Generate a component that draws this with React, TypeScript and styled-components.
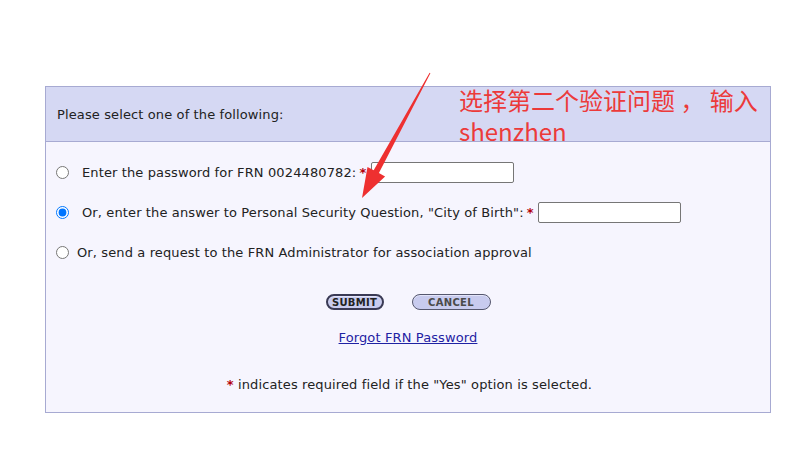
import React from "react";
import styled, { createGlobalStyle } from "styled-components";

const Global = createGlobalStyle`
  html, body { margin: 0; padding: 0; background: #ffffff; }
  body { font-family: "DejaVu Sans", Verdana, sans-serif; font-size: 13px; color: #222; }
`;

const Page = styled.div`
  position: relative;
  width: 803px;
  height: 456px;
  padding: 86px 0 0 45px;
  box-sizing: border-box;
`;

const Panel = styled.div`
  width: 726px;
  border: 1px solid #a7aad2;
  box-sizing: border-box;
  background: #f6f5fe;
`;

const Header = styled.div`
  height: 54px;
  background: #d5d8f3;
  border-bottom: 1px solid #a7aad2;
  display: flex;
  align-items: center;
  padding-left: 11px;
  font-size: 13px;
  letter-spacing: 0.12px;
  color: #222;
`;

const Body = styled.div`
  padding: 10px 0 0 9px;
  height: 270px;
  box-sizing: border-box;
  display: flex;
  flex-direction: column;
  font-size: 13px;
  letter-spacing: 0.12px;
`;

const Row = styled.label`
  height: 40px;
  display: flex;
  align-items: center;
  color: #222;
`;

const Radio = styled.input.attrs({ type: "radio", name: "opt" })`
  width: 13px;
  height: 13px;
  margin: 0 ${(p: { $gap: number }) => p.$gap}px 0 1px;
  accent-color: #0075ff;
`;

const Star = styled.span`
  color: #b3000c;
  font-weight: bold;
  margin-left: 3px;
`;

const TextBox = styled.input.attrs({ type: "text" })`
  width: 143px;
  height: 21px;
  box-sizing: border-box;
  border: 1px solid #767676;
  border-radius: 2px;
  background: #fff;
  margin-left: ${(p: { $left: number }) => p.$left}px;
`;

const Buttons = styled.div`
  display: flex;
  justify-content: center;
  gap: 28px;
  margin-top: 22px;
  padding-right: 9px;
`;

const Pill = styled.button<{ $w: number; $dark?: boolean }>`
  width: ${(p) => p.$w}px;
  height: 16px;
  border-radius: 9px;
  border: ${(p) => (p.$dark ? "2px solid #3a3a55" : "1px solid #55576e")};
  background: #c8cbee;
  font-family: "DejaVu Sans", Verdana, sans-serif;
  font-size: 10px;
  font-weight: bold;
  color: ${(p) => (p.$dark ? "#222" : "#4a4a4a")};
  padding: 0;
  display: flex;
  align-items: center;
  justify-content: center;
  letter-spacing: 0.3px;
  box-shadow: inset 0 1px 0 #e2e4f9;
`;

const LinkRow = styled.div`
  text-align: center;
  margin-top: 20px;
  padding-right: 9px;
`;

const Link = styled.a`
  color: #1f22a3;
  text-decoration: underline;
`;

const Note = styled.div`
  text-align: center;
  margin-top: 32px;
  padding-right: 9px;
  color: #222;
`;

const Annotation = styled.div`
  position: absolute;
  left: 459px;
  top: 84px;
  font-family: "Noto Sans CJK SC", "Noto Sans", sans-serif;
  font-size: 24px;
  line-height: 31px;
  color: #ec3a3a;
`;

const Arrow = styled.svg`
  position: absolute;
  left: 0;
  top: 0;
  pointer-events: none;
`;

export default function App() {
  return (
    <>
      <Global />
      <Page>
        <Panel>
          <Header>Please select one of the following:</Header>
          <Body>
            <Row>
              <Radio $gap={13} />
              Enter the password for FRN 0024480782:<Star>*</Star>
              <TextBox $left={5} />
            </Row>
            <Row>
              <Radio $gap={13} defaultChecked />
              Or, enter the answer to Personal Security Question, "City of Birth":<Star>*</Star>
              <TextBox $left={4} />
            </Row>
            <Row>
              <Radio $gap={8} />
              Or, send a request to the FRN Administrator for association approval
            </Row>
            <Buttons>
              <Pill $w={58} $dark>SUBMIT</Pill>
              <Pill $w={79}>CANCEL</Pill>
            </Buttons>
            <LinkRow>
              <Link href="#">Forgot FRN Password</Link>
            </LinkRow>
            <Note>
              <Star>*</Star> indicates required field if the "Yes" option is selected.
            </Note>
          </Body>
        </Panel>
        <Annotation>
          选择第二个验证问题 ， 输入
          <br />
          shenzhen
        </Annotation>
        <Arrow width="803" height="456" viewBox="0 0 803 456">
          <polygon
            points="429.6,72.8 373.7,170.3 367.5,166.9 362,198 385.1,176.5 378.9,173.1 430.4,73.2"
            fill="#ee3030"
          />
        </Arrow>
      </Page>
    </>
  );
}
